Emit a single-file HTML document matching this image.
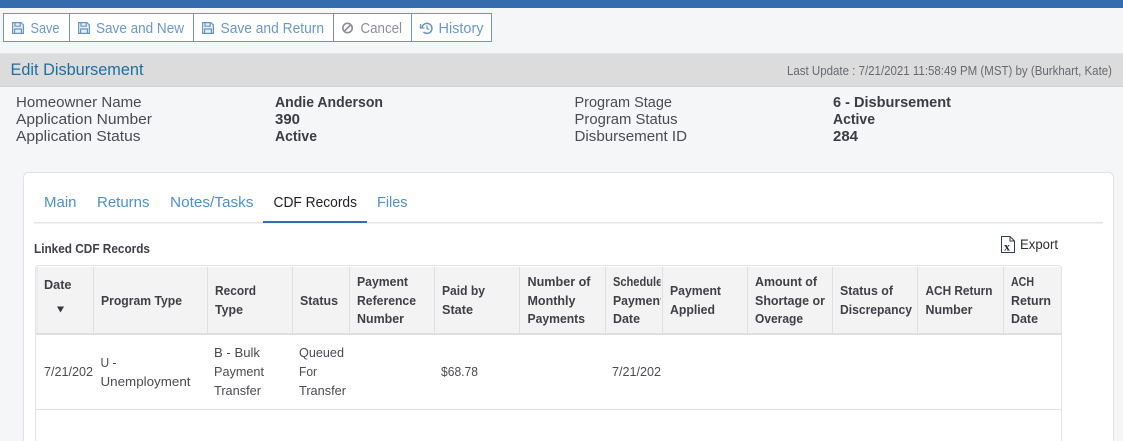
<!DOCTYPE html>
<html><head><meta charset="utf-8"><style>
html,body{margin:0;padding:0;width:1123px;height:441px;overflow:hidden;background:#f5f6f8}
svg{display:block}
text{font-family:"Liberation Sans",sans-serif}
.t{font-size:15px;fill:#6a98c8}
.g{fill:#8f8f9b}
.l{font-size:15px;fill:#4a4a52}
.v{font-size:15px;font-weight:bold;fill:#3c3c44}
.tab{font-size:15px;fill:#4e90c8}
.h{font-size:13px;font-weight:bold;fill:#3f3f47}
.c{font-size:13px;fill:#4a4a52}
</style></head><body>
<svg width="1123" height="441" viewBox="0 0 1123 441" xmlns="http://www.w3.org/2000/svg">
<defs>
<g id="sv" fill="none" stroke-width="1.2"><path d="M.6.6H9l2.4 2.4v8.4H.6z" fill="#e6eef7"/><path d="M3 .8v3.4h5.2V.8M2.6 11.2V7h6.800v4.200"/></g>
<clipPath id="c1"><rect x="606" y="267" width="54.500" height="125"/></clipPath>
<clipPath id="c2"><rect x="37" y="340" width="56" height="60"/></clipPath>
</defs>
<rect width="1123" height="441" fill="#f5f6f8"/>
<rect width="1123" height="8" fill="#346cae"/>

<rect x="3.500" y="13.500" width="488" height="28" fill="#fff" stroke="#6a96c6"/>
<path d="M69.500 13v29M193.500 13v29M411.500 13v29" stroke="#6a96c6"/>
<path d="M333.500 13.500H411.500M333.500 41.500H411.500M333.500 13v29" stroke="#8b8b97"/>
<use href="#sv" x="12" y="22" stroke="#6a96c6"/>
<use href="#sv" x="78" y="22" stroke="#6a96c6"/>
<use href="#sv" x="202" y="22" stroke="#6a96c6"/>
<text class="t" x="30.500" y="33" textLength="29" lengthAdjust="spacingAndGlyphs">Save</text>
<text class="t" x="96" y="33" textLength="88" lengthAdjust="spacingAndGlyphs">Save and New</text>
<text class="t" x="220.500" y="33" textLength="103.500" lengthAdjust="spacingAndGlyphs">Save and Return</text>
<circle cx="347.500" cy="28" r="4.700" fill="none" stroke="#8f8f9b" stroke-width="1.700"/><path d="M344.500 31l6-6" stroke="#8f8f9b" stroke-width="1.700"/>
<text class="t g" x="360.500" y="33" textLength="41.500" lengthAdjust="spacingAndGlyphs">Cancel</text>
<path d="M422 27.500A5 5 0 1 1 423.500 32" fill="none" stroke="#6a96c6" stroke-width="1.600"/><path d="M420.500 24v4h4" fill="none" stroke="#6a96c6" stroke-width="1.300"/><path d="M427 25.500v3l2 1" fill="none" stroke="#6a96c6" stroke-width="1.300"/>
<text class="t" x="438.500" y="33" textLength="45" lengthAdjust="spacingAndGlyphs">History</text>

<rect y="53" width="1123" height="34" fill="#dcdcdc"/>
<path d="M0 53.500H1123" stroke="#e4e4e4"/><path d="M0 86.500H1123" stroke="#d2d2d2"/>
<text x="10.500" y="75" font-size="17" fill="#1e6f9f" textLength="133" lengthAdjust="spacingAndGlyphs">Edit Disbursement</text>
<text x="787" y="75" font-size="13" fill="#666a70" textLength="325" lengthAdjust="spacingAndGlyphs">Last Update : 7/21/2021 11:58:49 PM (MST) by (Burkhart, Kate)</text>

<text class="l" x="16" y="107" textLength="125.500" lengthAdjust="spacingAndGlyphs">Homeowner Name</text>
<text class="l" x="16" y="124" textLength="136" lengthAdjust="spacingAndGlyphs">Application Number</text>
<text class="l" x="16" y="141" textLength="124.500" lengthAdjust="spacingAndGlyphs">Application Status</text>
<text class="v" x="275" y="107" textLength="108" lengthAdjust="spacingAndGlyphs">Andie Anderson</text>
<text class="v" x="275" y="124" textLength="25" lengthAdjust="spacingAndGlyphs">390</text>
<text class="v" x="275" y="141" textLength="42" lengthAdjust="spacingAndGlyphs">Active</text>
<text class="l" x="574.500" y="107" textLength="97.500" lengthAdjust="spacingAndGlyphs">Program Stage</text>
<text class="l" x="574.500" y="124" textLength="103" lengthAdjust="spacingAndGlyphs">Program Status</text>
<text class="l" x="574.500" y="141" textLength="112.500" lengthAdjust="spacingAndGlyphs">Disbursement ID</text>
<text class="v" x="833" y="107" textLength="118" lengthAdjust="spacingAndGlyphs">6 - Disbursement</text>
<text class="v" x="833" y="124" textLength="42" lengthAdjust="spacingAndGlyphs">Active</text>
<text class="v" x="833" y="141" textLength="25" lengthAdjust="spacingAndGlyphs">284</text>

<rect x="23.500" y="172.500" width="1090" height="280" rx="5" fill="#fff" stroke="#e2e2e4"/>
<text class="tab" x="44" y="207" textLength="32.500" lengthAdjust="spacingAndGlyphs">Main</text>
<text class="tab" x="97" y="207" textLength="52.500" lengthAdjust="spacingAndGlyphs">Returns</text>
<text class="tab" x="170" y="207" textLength="83.500" lengthAdjust="spacingAndGlyphs">Notes/Tasks</text>
<text x="273.500" y="207" font-size="15" fill="#1f1f26" textLength="83.500" lengthAdjust="spacingAndGlyphs">CDF Records</text>
<text class="tab" x="377" y="207" textLength="30.500" lengthAdjust="spacingAndGlyphs">Files</text>
<rect x="34" y="222" width="1069" height="1.500" fill="#e4e4e4"/>
<rect x="263" y="221" width="104" height="2" fill="#346cae"/>

<text x="34" y="253" font-size="13" font-weight="bold" fill="#3f3f47" textLength="116" lengthAdjust="spacingAndGlyphs">Linked CDF Records</text>
<g fill="none" stroke="#333d50" stroke-width="1">
<path d="M1001.500 236.500h8.500l4.500 4.500v11.500h-13z" fill="#fff"/><path d="M1010 236.500v4.500h4.500"/>
</g>
<text x="1004" y="250.500" font-size="12" font-weight="bold" fill="#1c2430" style="font-family:'Liberation Serif',serif">x</text>
<text x="1020" y="249" font-size="13.500" fill="#2d2d35" textLength="38" lengthAdjust="spacingAndGlyphs">Export</text>

<path d="M35.500 441V269q0-3.500 3.500-3.500H1058q3.500 0 3.500 3.500V441" fill="#fff" stroke="#e3e3e3"/>
<rect x="37" y="267" width="1024" height="66" fill="#f3f3f3"/>
<rect x="36" y="333" width="1025.500" height="2" fill="#dedede"/>
<path d="M37 267v66M93.500 267v66M207.500 267v66M292.500 267v66M349.500 267v66M434.500 267v66M519.500 267v66M605.500 267v66M662.500 267v66M747.500 267v66M832.500 267v66M917.500 267v66M1003.500 267v66" stroke="#e0e0e0"/>
<path d="M36 409.500H1061" stroke="#e2e2e2"/>

<text class="h" x="44" y="289" textLength="27.500" lengthAdjust="spacingAndGlyphs">Date</text>
<path d="M57 306.500h7l-3.500 6z" fill="#36363e"/>
<text class="h" x="101" y="305" textLength="81" lengthAdjust="spacingAndGlyphs">Program Type</text>
<text class="h" x="215" y="295" textLength="41" lengthAdjust="spacingAndGlyphs">Record</text>
<text class="h" x="215" y="314" textLength="28" lengthAdjust="spacingAndGlyphs">Type</text>
<text class="h" x="300" y="305" textLength="38" lengthAdjust="spacingAndGlyphs">Status</text>
<text class="h" x="357" y="286" textLength="51" lengthAdjust="spacingAndGlyphs">Payment</text>
<text class="h" x="357" y="305" textLength="59" lengthAdjust="spacingAndGlyphs">Reference</text>
<text class="h" x="357" y="323" textLength="47" lengthAdjust="spacingAndGlyphs">Number</text>
<text class="h" x="442" y="295" textLength="43" lengthAdjust="spacingAndGlyphs">Paid by</text>
<text class="h" x="442" y="314" textLength="31" lengthAdjust="spacingAndGlyphs">State</text>
<text class="h" x="527.500" y="286" textLength="63" lengthAdjust="spacingAndGlyphs">Number of</text>
<text class="h" x="527.500" y="305" textLength="48" lengthAdjust="spacingAndGlyphs">Monthly</text>
<text class="h" x="527.500" y="323" textLength="57.500" lengthAdjust="spacingAndGlyphs">Payments</text>
<g clip-path="url(#c1)">
<text class="h" x="613" y="286" textLength="56" lengthAdjust="spacingAndGlyphs">Scheduled</text>
<text class="h" x="613" y="305" textLength="51" lengthAdjust="spacingAndGlyphs">Payment</text>
<text class="h" x="613" y="323" textLength="27" lengthAdjust="spacingAndGlyphs">Date</text>
</g>
<text class="h" x="670" y="295" textLength="51" lengthAdjust="spacingAndGlyphs">Payment</text>
<text class="h" x="670" y="314" textLength="45" lengthAdjust="spacingAndGlyphs">Applied</text>
<text class="h" x="755" y="286" textLength="62" lengthAdjust="spacingAndGlyphs">Amount of</text>
<text class="h" x="755" y="305" textLength="70" lengthAdjust="spacingAndGlyphs">Shortage or</text>
<text class="h" x="755" y="323" textLength="48" lengthAdjust="spacingAndGlyphs">Overage</text>
<text class="h" x="840" y="295" textLength="53" lengthAdjust="spacingAndGlyphs">Status of</text>
<text class="h" x="840" y="314" textLength="72" lengthAdjust="spacingAndGlyphs">Discrepancy</text>
<text class="h" x="925.500" y="295" textLength="67" lengthAdjust="spacingAndGlyphs">ACH Return</text>
<text class="h" x="925.500" y="314" textLength="47" lengthAdjust="spacingAndGlyphs">Number</text>
<text class="h" x="1011" y="286" textLength="23" lengthAdjust="spacingAndGlyphs">ACH</text>
<text class="h" x="1011" y="305" textLength="40" lengthAdjust="spacingAndGlyphs">Return</text>
<text class="h" x="1011" y="323" textLength="27" lengthAdjust="spacingAndGlyphs">Date</text>

<g clip-path="url(#c2)"><text class="c" x="44" y="376" textLength="56" lengthAdjust="spacingAndGlyphs">7/21/2021</text></g>
<text class="c" x="100.500" y="367" textLength="16" lengthAdjust="spacingAndGlyphs">U -</text>
<text class="c" x="100.500" y="386" textLength="90" lengthAdjust="spacingAndGlyphs">Unemployment</text>
<text class="c" x="214" y="357" textLength="46" lengthAdjust="spacingAndGlyphs">B - Bulk</text>
<text class="c" x="214" y="376" textLength="50" lengthAdjust="spacingAndGlyphs">Payment</text>
<text class="c" x="214" y="395" textLength="47" lengthAdjust="spacingAndGlyphs">Transfer</text>
<text class="c" x="299" y="357" textLength="45" lengthAdjust="spacingAndGlyphs">Queued</text>
<text class="c" x="299" y="376" textLength="18" lengthAdjust="spacingAndGlyphs">For</text>
<text class="c" x="299" y="395" textLength="47" lengthAdjust="spacingAndGlyphs">Transfer</text>
<text class="c" x="441" y="376" textLength="37" lengthAdjust="spacingAndGlyphs">$68.78</text>
<g clip-path="url(#c1)"><text class="c" x="612" y="376" textLength="56" lengthAdjust="spacingAndGlyphs">7/21/2021</text></g>
</svg>
</body></html>
